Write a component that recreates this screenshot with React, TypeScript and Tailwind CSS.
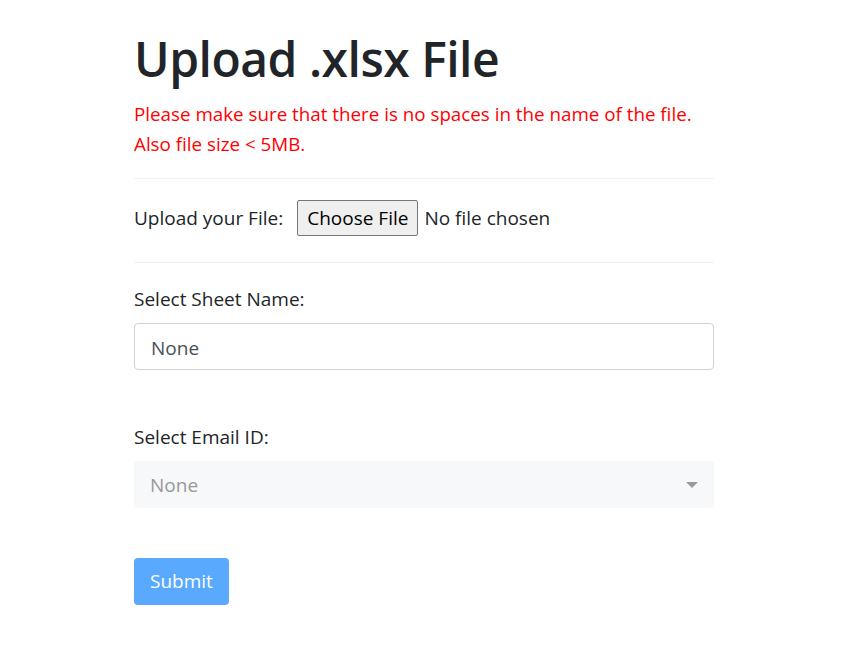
import { useState } from "react";

function App() {
	const [sheet] = useState("None");

	return (
		<main
			className="min-h-screen bg-white text-[#212529] pl-[2px]"
			style={{ fontFamily: '"Open Sans", "Noto Sans", sans-serif' }}
		>
			<section className="w-[580px] mx-auto pt-[24px]">
				<h1 className="text-[48px] font-semibold leading-[70px] tracking-[-0.5px]">Upload .xlsx File</h1>
				<p className="text-[#ff0000] text-[18.8px] leading-[30px] mt-[5px]">
					Please make sure that there is no spaces in the name of the file.
					<br />
					Also file size &lt; 5MB.
				</p>

				<hr className="mt-[19px] border-t border-[#f1f1f1]" />

				<div className="flex items-center h-[83px] pb-[5px] text-[19px]">
					<span>Upload your File:</span>
					<button className="ml-[14px] h-[36px] px-[9px] border border-[#767676] rounded-[2px] bg-[#efefef] text-[#000] text-[19px]">
						Choose File
					</button>
					<span className="ml-[6px]">No file chosen</span>
				</div>

				<hr className="border-t border-[#f1f1f1]" />

				<label className="block mt-[22px] text-[19px] leading-[28px]">Select Sheet Name:</label>
				<div className="mt-[10px] h-[47px] flex items-center px-[16px] pt-[3px] border border-[#ced4da] rounded-[4px] text-[19px] text-[#495057]">
					{sheet}
				</div>

				<label className="block mt-[53px] text-[19px] leading-[28px]">Select Email ID:</label>
				<div className="mt-[10px] h-[47px] flex items-center justify-between px-[16px] pt-[1px] rounded-[4px] bg-[#f7f8f9] text-[19px] text-[#999]">
					<span>None</span>
					<svg width="12" height="8" viewBox="0 0 12 8">
						<path d="M0 1h12L6 7z" fill="#999" />
					</svg>
				</div>

				<button className="mt-[50px] h-[47px] px-[16px] rounded-[4px] bg-[#59a9ff] text-white text-[19px]">
					Submit
				</button>
			</section>
		</main>
	);
}

export default App;
